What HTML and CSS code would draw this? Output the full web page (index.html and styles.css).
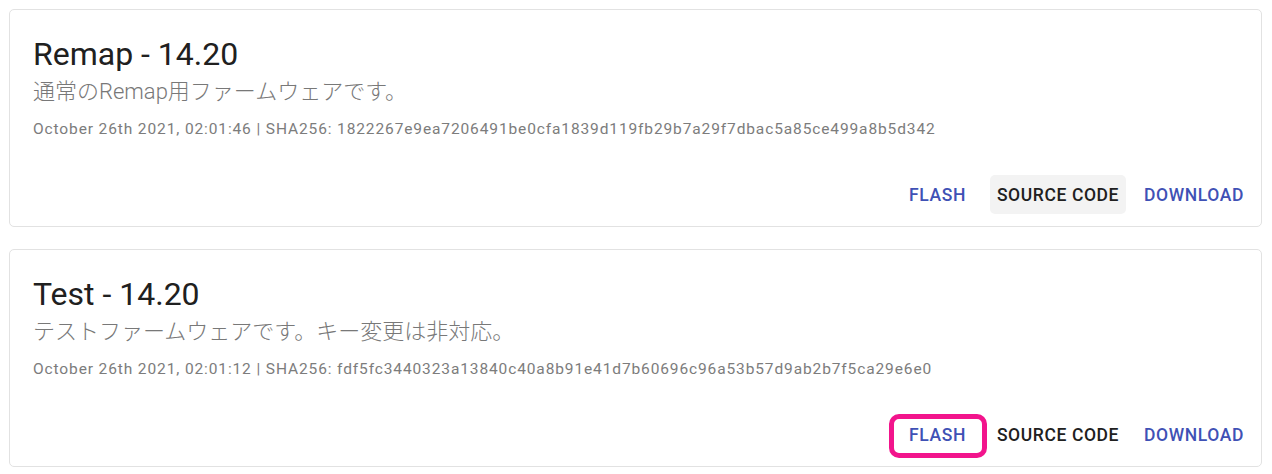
FILE: index.html
```html
<!DOCTYPE html>
<html lang="ja">
<head>
<meta charset="utf-8">
<title>Firmware</title>
<link rel="stylesheet" href="styles.css">
</head>
<body>
<div class="list">
  <div class="card">
    <div class="title">Remap - 14.20</div>
    <div class="subtitle">通常のRemap用ファームウェアです。</div>
    <div class="meta">October 26th 2021, 02:01:46 | SHA256: 1822267e9ea7206491be0cfa1839d119fb29b7a29f7dbac5a85ce499a8b5d342</div>
    <div class="actions">
      <span class="btn primary flash">FLASH</span>
      <span class="btn dark hovered">SOURCE CODE</span>
      <span class="btn primary">DOWNLOAD</span>
    </div>
  </div>
  <div class="card">
    <div class="title">Test - 14.20</div>
    <div class="subtitle">テストファームウェアです。キー変更は非対応。</div>
    <div class="meta">October 26th 2021, 02:01:12 | SHA256: fdf5fc3440323a13840c40a8b91e41d7b60696c96a53b57d9ab2b7f5ca29e6e0</div>
    <div class="actions">
      <span class="btn primary flash marked">FLASH</span>
      <span class="btn dark">SOURCE CODE</span>
      <span class="btn primary">DOWNLOAD</span>
    </div>
  </div>
</div>
</body>
</html>
```
FILE: styles.css
```css
html, body {
  margin: 0;
  padding: 0;
  background: #ffffff;
}
body {
  font-family: Roboto, "Noto Sans CJK JP", sans-serif;
  padding: 9px 10px 0 9px;
}
.list {
  display: flex;
  flex-direction: column;
  gap: 22px;
}
.card {
  box-sizing: border-box;
  height: 218px;
  border: 1px solid #e2e2e2;
  border-radius: 5px;
  padding: 24px 10px 12px 23px;
  display: flex;
  flex-direction: column;
}
.title {
  font-size: 32px;
  line-height: 40px;
  color: #202020;
  font-weight: 400;
}
.subtitle {
  font-size: 22px;
  line-height: 30px;
  color: #787878;
  font-weight: 300;
  margin-top: 3px;
}
.meta {
  font-size: 15.5px;
  line-height: 20px;
  color: #7c7c7c;
  letter-spacing: 0.88px;
  margin-top: 12px;
}
.actions {
  margin-top: auto;
  display: flex;
  justify-content: flex-end;
  align-items: center;
  gap: 11px;
}
.btn {
  position: relative;
  height: 39px;
  display: flex;
  align-items: center;
  padding: 0 7px;
  font-size: 17.5px;
  font-weight: 500;
  letter-spacing: 0.6px;
  border-radius: 5px;
}
.primary { color: #3f51b5; }
.dark { color: #202020; }
.hovered { background: #f3f3f3; }
.flash { margin-right: 6px; }
.marked::after {
  content: "";
  position: absolute;
  left: -13px;
  right: -14px;
  top: -1px;
  bottom: -4px;
  border: 5px solid #f2148c;
  border-radius: 10px;
}
```
